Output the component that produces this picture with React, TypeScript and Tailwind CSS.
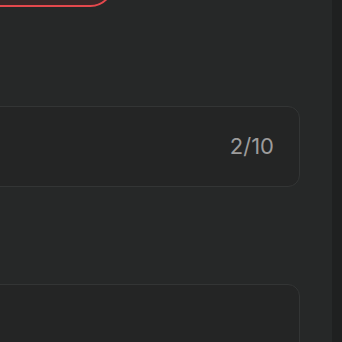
export default function App() {
  return (
    <div className="flex h-[342px] w-[342px] overflow-hidden bg-[#262828] font-['Inter',sans-serif]">
      <div className="relative flex-1 overflow-hidden">
        <div className="absolute -left-[60px] -top-[40px] h-[47px] w-[174px] rounded-[24px] border-2 border-[#e5484d] bg-[#3a2728]" />
        <div className="ml-[-40px] mr-[32px] pt-[106px]">
          <div className="flex h-[81px] items-center justify-end rounded-[12px] border border-[#333535] bg-[#242525] pr-[25px]">
            <span className="text-[22px] text-[#9c9c9c]">2/10</span>
          </div>
          <div className="mt-[97px] h-[120px] rounded-[12px] border border-[#333535] bg-[#242525]" />
        </div>
      </div>
      <div className="w-[10px] bg-[#1f2020]" />
    </div>
  )
}
